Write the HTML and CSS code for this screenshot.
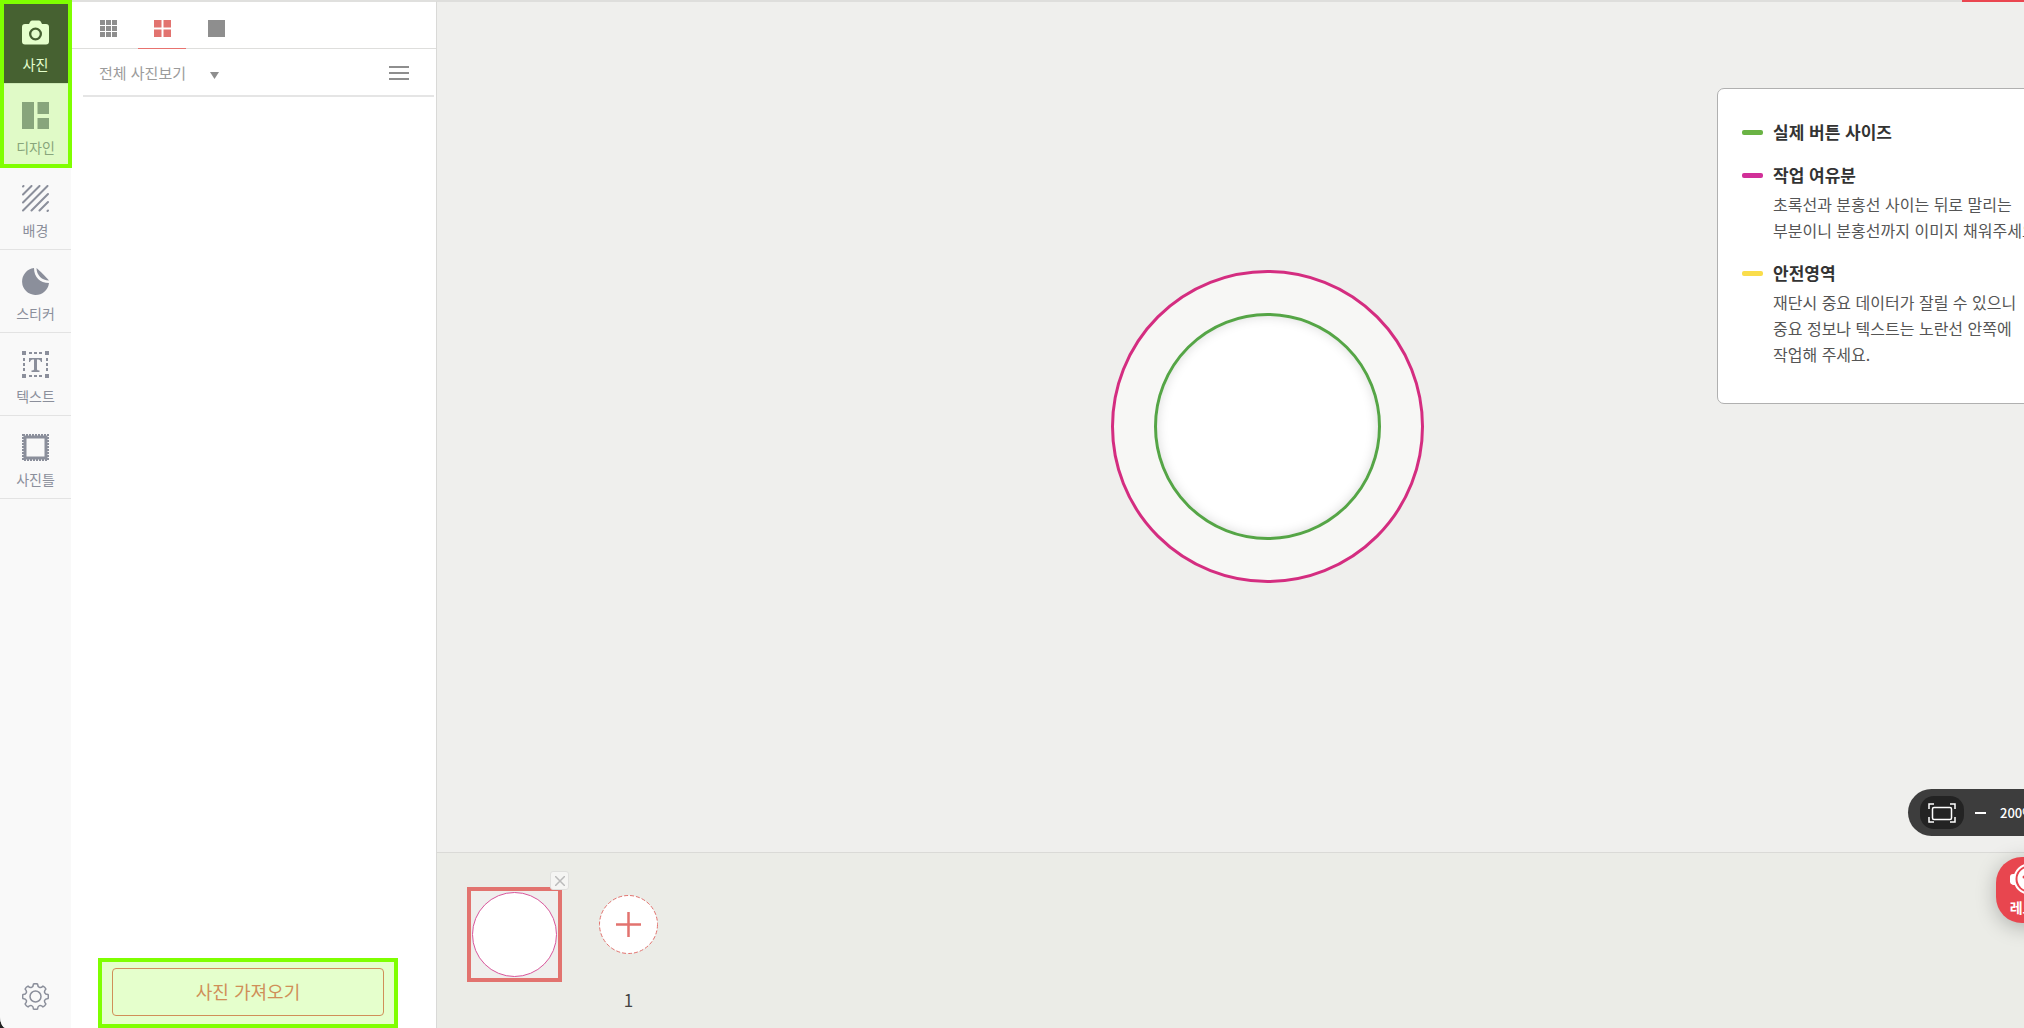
FILE: index.html
```html
<!DOCTYPE html>
<html lang="ko">
<head>
<meta charset="UTF-8">
<meta name="viewport" content="width=device-width, initial-scale=1.0">
<title>버튼 에디터</title>
<link rel="stylesheet" href="styles.css">
</head>
<body>
<div class="app">

<nav class="sidebar">
<button class="menu active">
<svg class="icon" viewBox="0 0 27 27"><path fill="currentColor" fill-rule="evenodd" d="M7 5 8 3Q8.500 1.500 10 1.500H17Q18.500 1.500 19 3L20 5H24Q27 5 27 8V22.500Q27 25.500 24 25.500H3Q0 25.500 0 22.500V8Q0 5 3 5ZM13.500 8.500a6.500 6.500 0 1 0 0 13 6.500 6.500 0 0 0 0-13Z"/><circle cx="13.500" cy="15" r="4.200" fill="currentColor"/></svg>
<span>사진</span>
</button>
<button class="menu">
<svg class="icon" viewBox="0 0 27 27"><path fill="currentColor" d="M0 0h12v27H0zM15.500 0H27v12H15.500zM15.500 16H27v11H15.500z"/></svg>
<span>디자인</span>
</button>
<button class="menu">
<svg class="icon" viewBox="0 0 27 27"><path stroke="currentColor" stroke-width="2" stroke-linecap="round" d="M1 1.500 1.500 1M1 9.500 9.500 1M1 17.500 17.500 1M1 25.500 25.500 1M9.500 25.500 26 9M17.500 25.500 26 17M25.500 26 26 25.500"/></svg>
<span>배경</span>
</button>
<button class="menu">
<svg class="icon" viewBox="0 0 27 27"><path fill="currentColor" d="M12 0C12 9 18 15 27 15A13.500 13.500 0 1 1 12 0ZM14.500 0C18 3 24 9 27 12.500 20 12.500 14.500 7 14.500 0Z"/></svg>
<span>스티커</span>
</button>
<button class="menu">
<svg class="icon" viewBox="0 0 27 27"><path fill="currentColor" d="M0 0h4v4H0zM23 0h4v4h-4zM0 23h4v4H0zM23 23h4v4h-4zM7 7h13v4h-1q-.5-2.500-2.500-2.500H15v10q0 1 2.500 1V21h-8v-1.500q2.500 0 2.500-1v-10h-1.500Q8.500 8.500 8 11H7z"/><path stroke="currentColor" stroke-width="2" stroke-dasharray="3 2" d="M7 2h14M7 25h14M2 7v14M25 7v14"/></svg>
<span>텍스트</span>
</button>
<button class="menu">
<svg class="icon" viewBox="0 0 27 27"><path fill="none" stroke="currentColor" stroke-width="3" d="M3 3h21v21H3z"/><path fill="none" stroke="currentColor" stroke-width="2" stroke-dasharray="2 1" d="M1 1h25v25H1z"/></svg>
<span>사진틀</span>
</button>
<button class="settings" aria-label="설정">
<svg class="icon" viewBox="0 0 27 27"><g fill="none" stroke="currentColor" stroke-width="1.500" stroke-linejoin="round"><path d="M15.500 .9C15.700 4.600 18.400 5.600 21 3.100Q22.900 3.900 23.900 6C21.400 8.600 22.400 11.300 26.100 11.500Q26.600 13.500 26.100 15.500C22.400 15.700 21.400 18.400 23.900 21Q22.900 23.100 21 23.900C18.400 21.400 15.700 22.400 15.500 26.100Q13.500 26.600 11.500 26.100C11.300 22.400 8.600 21.400 6 23.900Q4.100 23.100 3.100 21C5.600 18.400 4.600 15.700 .9 15.500Q.4 13.500 .9 11.500C4.600 11.300 5.600 8.600 3.100 6Q4.100 3.900 6 3.100C8.600 5.600 11.300 4.600 11.500 .9Q13.500 .4 15.500 .9Z"/><circle cx="13.500" cy="13.500" r="5.500"/></g></svg>
</button>
<div class="highlight"></div>
</nav>

<aside class="panel">
<div class="tabs">
<button class="tab" aria-label="작게 보기"><svg viewBox="0 0 17 17"><path fill="currentColor" d="M0 0h5v5H0zM6 0h5v5H6zM12 0h5v5h-5zM0 6h5v5H0zM6 6h5v5H6zM12 6h5v5h-5zM0 12h5v5H0zM6 12h5v5H6zM12 12h5v5h-5z"/></svg></button>
<button class="tab selected" aria-label="보통 보기"><svg viewBox="0 0 17 17"><path fill="currentColor" d="M0 0h7.500v7.500H0zM9.500 0H17v7.500H9.500zM0 9.500h7.500V17H0zM9.500 9.500H17V17H9.500z"/></svg></button>
<button class="tab" aria-label="크게 보기"><svg viewBox="0 0 17 17"><path fill="currentColor" d="M0 0h17v17H0z"/></svg></button>
</div>
<div class="filter">
<div class="picker">
<select aria-label="사진 보기"><option>전체 사진보기</option></select>
<svg class="caret" viewBox="0 0 9 7"><path fill="currentColor" d="M0 0h9L4.500 7z"/></svg>
</div>
<button class="list" aria-label="정렬"><svg viewBox="0 0 20 14"><path stroke="currentColor" stroke-width="2" d="M0 1h20M0 7h20M0 13h20"/></svg></button>
</div>
<div class="photos"></div>
<div class="import">
<button class="import-button">사진 가져오기</button>
<div class="highlight"></div>
</div>
</aside>

<main class="workspace">
<section class="canvas">
<div class="bleed"><div class="trim"></div></div>

<div class="legend">
<h2 class="green">실제 버튼 사이즈</h2>
<h2 class="pink">작업 여유분</h2>
<p>초록선과 분홍선 사이는 뒤로 말리는<br>부분이니 분홍선까지 이미지 채워주세요.</p>
<h2 class="yellow">안전영역</h2>
<p>재단시 중요 데이터가 잘릴 수 있으니<br>중요 정보나 텍스트는 노란선 안쪽에<br>작업해 주세요.</p>
</div>

<div class="zoom">
<button class="fit" aria-label="화면 맞춤"><svg viewBox="0 0 28 20"><g fill="none" stroke="currentColor" stroke-width="1.500"><path d="M1 6V1h5M22 1h5v5M27 14v5h-5M6 19H1v-5"/><rect x="4.500" y="4.500" width="19" height="12" rx="1.500"/></g></svg></button>
<button class="minus" aria-label="축소"></button>
<span>200%</span>
</div>
</section>

<section class="pages">
<div class="page">
<div class="page-circle"></div>
<button class="remove" aria-label="삭제"><svg viewBox="0 0 10 10"><path stroke="currentColor" stroke-width="1.500" d="M0 0l10 10M10 0 0 10"/></svg></button>
</div>
<div class="add-page">
<button class="add" aria-label="페이지 추가"><svg viewBox="0 0 59 59"><circle cx="29.500" cy="29.500" r="29" fill="#fff" stroke="currentColor" stroke-dasharray="4 2"/><path stroke="currentColor" stroke-width="2.500" d="M17 29.500h25M29.500 17v25"/></svg></button>
<span>1</span>
</div>
</section>
</main>

<button class="chat">
<svg viewBox="0 0 40 34"><circle cx="20" cy="16" r="14.500" fill="none" stroke="#fff" stroke-width="2"/><circle cx="20" cy="16" r="11.500" fill="#fff"/><path fill="#fff" d="M6 11v11H4q-3-1-3-3v-5q0-3 3-3zM34 11v11h2q3-1 3-3v-5q0-3-3-3z"/><circle cx="15" cy="14" r="1.500" fill="#e8464f"/></svg>
<span>레드톡</span>
</button>
<div class="accent"></div>
</div>
</body>
</html>
```

FILE: styles.css
```css
* {
margin: 0;
padding: 0;
box-sizing: border-box;
}

body {
background: #222;
font-family: "Noto Sans CJK KR", "Noto Sans", sans-serif;
}

button, select {
font-family: inherit;
border: none;
background: none;
cursor: pointer;
}

svg {
display: block;
}

.app {
display: flex;
height: 100vh;
position: relative;
overflow: hidden;
background: #fff;
border-bottom-left-radius: 6px 12px;
}

.accent {
position: absolute;
top: 0;
right: 0;
width: 62px;
height: 2px;
background: #ea4650;
}

.highlight {
position: absolute;
inset: 0;
border: 4px solid #7fff00;
background: rgba(127, 255, 0, 0.2);
background-clip: padding-box;
pointer-events: none;
}

/* left menu */
.sidebar {
flex: none;
width: 71px;
padding-top: 1px;
display: flex;
flex-direction: column;
background: #f9f9f9;
color: #8b8f9b;
position: relative;
}

.sidebar .highlight {
z-index: 1;
width: 72px;
height: 168px;
}

.menu {
display: flex;
flex-direction: column;
align-items: center;
gap: 8px;
height: 83px;
padding-top: 18px;
border-bottom: 1px solid #e3e3e3;
color: inherit;
font-size: 14px;
line-height: 20px;
}

.icon {
width: 27px;
height: 27px;
}

.menu.active {
background: #393a3e;
color: #fff;
}

.settings {
margin: auto auto 18px;
color: #8b8f9b;
}

/* photo panel */
.panel {
flex: none;
width: 366px;
display: flex;
flex-direction: column;
border-top: 2px solid #e0e0de;
border-right: 1px solid #d9d9d7;
}

.tabs {
display: flex;
gap: 6px;
height: 47px;
padding-left: 13px;
border-bottom: 1px solid #dededc;
color: #8e8e8e;
}

.tab {
display: flex;
justify-content: center;
width: 48px;
height: 47px;
padding-top: 18px;
color: inherit;
}

.tab svg {
width: 17px;
height: 17px;
}

.tab.selected {
color: #e2736f;
border-bottom: 1px solid #e8736f;
}

.filter {
display: flex;
align-items: center;
justify-content: space-between;
height: 48px;
margin: 0 2px 0 12px;
padding: 2px 25px 0 16px;
border-bottom: 2px solid #e5e5e5;
color: #8e8e8e;
}

.picker {
display: flex;
align-items: center;
gap: 24px;
}

.picker select {
appearance: none;
color: #9b9b9b;
font-size: 15px;
line-height: 22px;
}

.caret {
width: 9px;
height: 7px;
margin-top: 4px;
}

.list {
color: inherit;
}

.list svg {
width: 20px;
height: 14px;
}

.photos {
flex: 1;
}

.import {
position: relative;
width: 300px;
height: 70px;
margin-left: 27px;
padding: 10px 14px;
}

.import-button {
width: 272px;
height: 48px;
padding-bottom: 3px;
border: 1px solid #e5736f;
border-radius: 4px;
color: #e5736f;
font-size: 18px;
}

/* workspace */
.workspace {
flex: 1;
min-width: 0;
display: flex;
flex-direction: column;
border-top: 2px solid #dededc;
}

.canvas {
flex: 1;
display: flex;
align-items: center;
justify-content: center;
padding: 0 0 2px 74px;
position: relative;
overflow: hidden;
background: #efefed;
}

.bleed {
display: flex;
align-items: center;
justify-content: center;
width: 313px;
height: 313px;
border: 3px solid #d42d80;
border-radius: 50%;
background: #f7f7f5;
}

.trim {
width: 227px;
height: 227px;
border: 3px solid #55a546;
border-radius: 50%;
background: #fff;
box-shadow: inset 0 0 12px rgba(0, 0, 0, 0.15);
}

.legend {
position: absolute;
top: 86px;
right: -60px;
width: 367px;
padding: 30px 24px 36px;
border: 1px solid #b0b0b0;
border-radius: 7px;
background: #fff;
white-space: nowrap;
color: #555;
font-size: 16px;
line-height: 26px;
}

.legend h2 {
display: flex;
align-items: center;
gap: 10px;
color: #333;
font-size: 17px;
line-height: 26px;
}

.legend h2::before {
content: "";
width: 21px;
height: 5px;
border-radius: 2px;
background: currentColor;
}

.legend h2.green::before {
background: #6ab344;
}

.legend h2.pink::before {
background: #d12f98;
}

.legend h2.yellow::before {
background: #fadd4b;
}

.legend h2 + h2,
.legend p + h2 {
margin-top: 17px;
}

.legend p {
margin-top: 3px;
padding-left: 31px;
}

.zoom {
position: absolute;
right: -100px;
bottom: 16px;
display: flex;
align-items: center;
width: 216px;
height: 47px;
padding-left: 12px;
border-radius: 24px;
background: #3d3d3d;
color: #fff;
font-size: 13px;
font-weight: 500;
}

.fit {
display: flex;
align-items: center;
justify-content: center;
width: 44px;
height: 33px;
border-radius: 14px;
background: #232323;
color: #fff;
}

.fit svg {
width: 28px;
height: 20px;
}

.minus {
width: 11px;
height: 2px;
margin: 0 14px 0 11px;
background: #fff;
}

/* page list */
.pages {
display: flex;
gap: 37px;
height: 176px;
padding: 34px 30px 0;
border-top: 1px solid #dadad7;
background: #ebece7;
}

.page {
position: relative;
width: 95px;
height: 95px;
padding: 1px;
border: 4px solid #e2736f;
background: #efefed;
}

.page-circle {
width: 85px;
height: 85px;
border: 1px solid #d8569b;
border-radius: 50%;
background: #fff;
}

.remove {
position: absolute;
top: -20px;
right: -11px;
display: flex;
align-items: center;
justify-content: center;
width: 19px;
height: 19px;
border: 1px solid #e0e0de;
border-radius: 3px;
background: #f5f5f3;
color: #bbb;
}

.remove svg {
width: 10px;
height: 10px;
}

.add-page {
display: flex;
flex-direction: column;
align-items: center;
gap: 33px;
padding-top: 8px;
color: #444;
font-size: 17px;
line-height: 26px;
}

.add {
color: #e2736f;
}

.add svg {
width: 59px;
height: 59px;
}

.chat {
position: absolute;
right: -38px;
bottom: 105px;
display: flex;
flex-direction: column;
align-items: center;
width: 66px;
height: 66px;
padding-top: 6px;
border-radius: 26px;
background: #e8464f;
box-shadow: 0 4px 20px rgba(0, 0, 0, 0.25);
color: #fff;
font-size: 14px;
font-weight: bold;
line-height: 20px;
}

.chat svg {
width: 40px;
height: 34px;
}
```
